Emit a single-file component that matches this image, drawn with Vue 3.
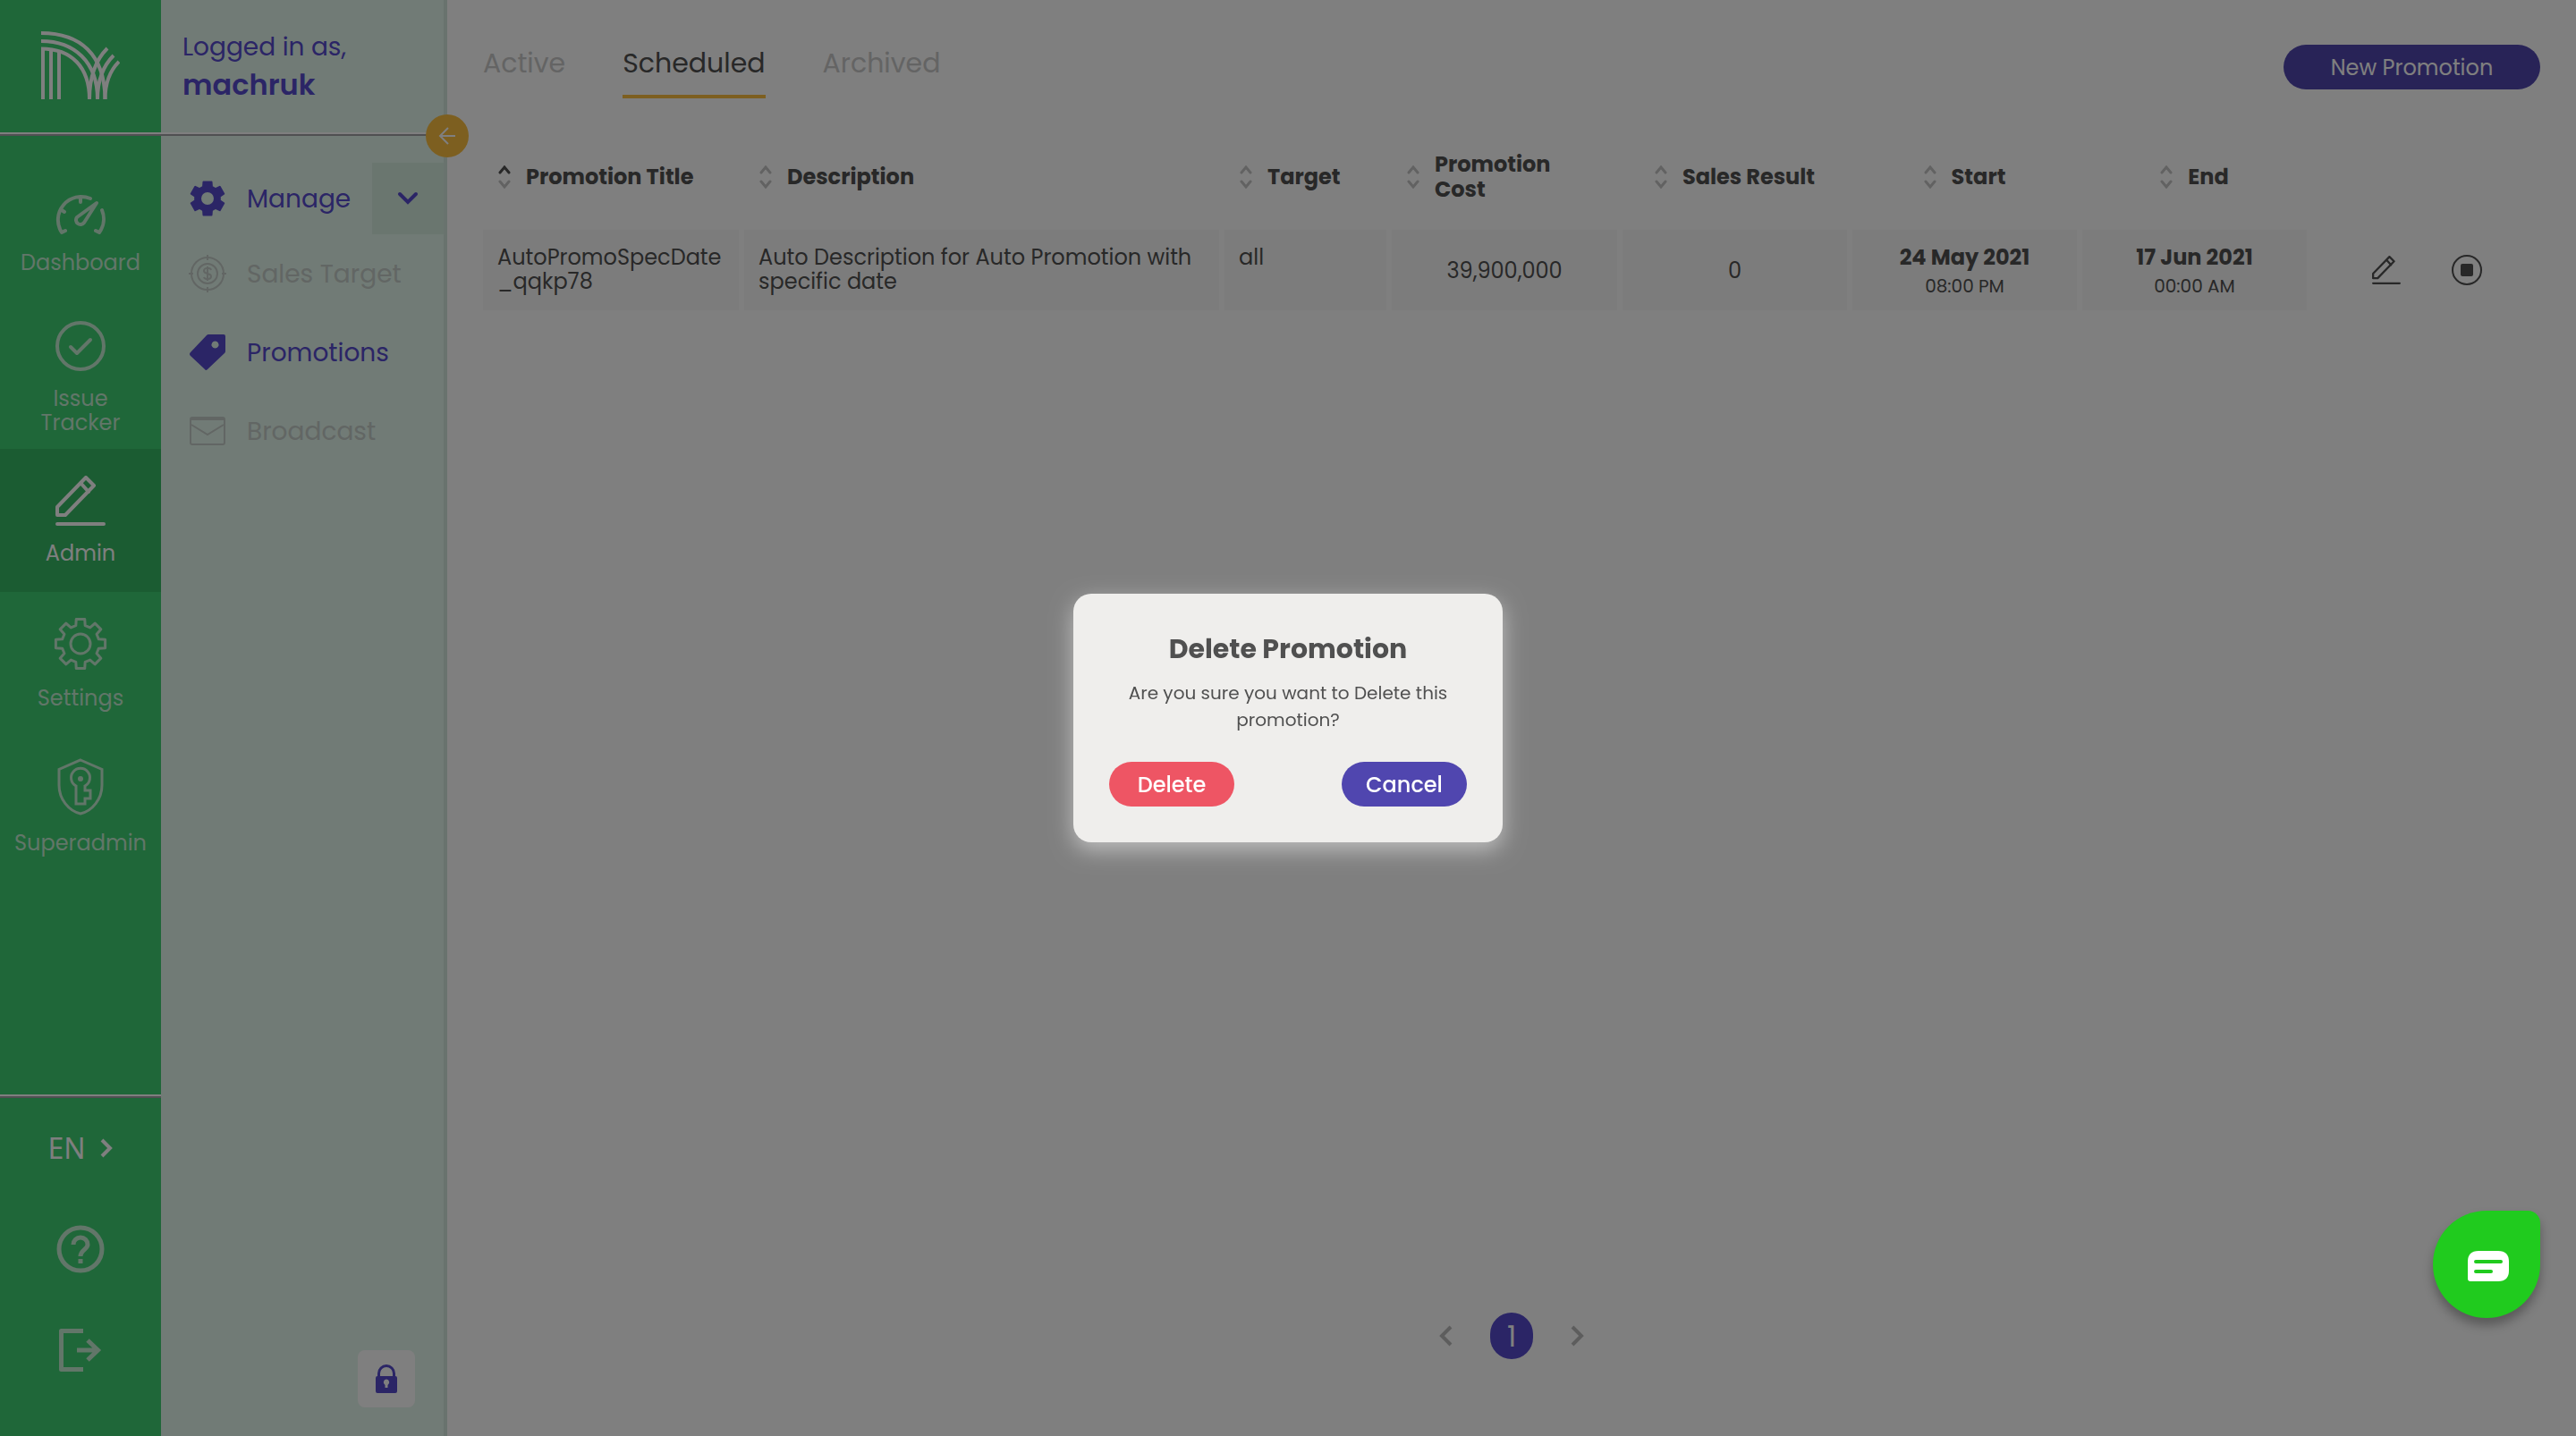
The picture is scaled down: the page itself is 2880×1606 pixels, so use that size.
<script setup>
import { ref } from 'vue'

const railItems = [
  { id: 'dashboard', label: 'Dashboard' },
  { id: 'issues', label: 'Issue Tracker' },
  { id: 'admin', label: 'Admin', active: true },
  { id: 'settings', label: 'Settings' },
  { id: 'superadmin', label: 'Superadmin' }
]

const tabs = ['Active', 'Scheduled', 'Archived']
const currentTab = ref('Scheduled')

const columns = [
  { key: 'title', label: 'Promotion Title', sorted: true },
  { key: 'description', label: 'Description' },
  { key: 'target', label: 'Target' },
  { key: 'cost', label: 'Promotion Cost' },
  { key: 'result', label: 'Sales Result', centered: true },
  { key: 'start', label: 'Start', centered: true },
  { key: 'end', label: 'End', centered: true }
]

// Closed outline of a cog centred on 0,0
function gear(teeth, outer, root, topHalf, baseHalf) {
  const pts = []
  const at = (r, a) => `${(r * Math.sin(a)).toFixed(2)} ${(-r * Math.cos(a)).toFixed(2)}`
  for (let i = 0; i < teeth; i++) {
    const a = (i * 2 * Math.PI) / teeth
    pts.push(at(root, a - baseHalf), at(outer, a - topHalf), at(outer, a + topHalf), at(root, a + baseHalf))
  }
  return `M${pts.join('L')}Z`
}
const cogOutline = gear(8, 28, 21, 0.17, 0.25)
const cogSolid = gear(6, 19, 14, 0.24, 0.36)
</script>

<template>
  <div class="shell">
    <nav class="rail" aria-label="Main">
      <div class="brand">
        <svg width="88" height="76" viewBox="0 0 88 76" fill="none" stroke="#fff" stroke-width="4">
          <path d="M2 76V20M11 76V21M20 76V22" />
          <path d="M0 2C44 2 71 26 71.500 76M0 11C37 11 63 34 63 76M0 19.500C34 19.500 54 40 54 76" />
          <path d="M74 19C60 33 54 54 54 76M81 27C69 39 63 57 63 76M87 34C76 45 71.500 60 71.500 76" />
        </svg>
      </div>
      <div class="rule"></div>
      <ul class="rail-list">
        <li v-for="item in railItems" :key="item.id">
          <a href="#" class="rail-item" :class="{ active: item.active }">
            <svg v-if="item.id === 'dashboard'" width="56" height="46" viewBox="0 0 56 46" fill="none" stroke="currentColor" stroke-width="4" stroke-linecap="round" stroke-linejoin="round">
              <path d="M39 5A26 26 0 0 0 7 43L11 41M52 18A26 26 0 0 1 49 43L45 41M28 3V9M7 18L10 20M24 26L46 10L32 32A5 5 0 1 1 24 26Z" />
            </svg>
            <svg v-else-if="item.id === 'issues'" width="56" height="56" viewBox="0 0 56 56" fill="none" stroke="currentColor" stroke-width="4" stroke-linecap="round" stroke-linejoin="round">
              <circle cx="28" cy="28" r="26" />
              <path d="M17 29L24 36L39 21" />
            </svg>
            <svg v-else-if="item.id === 'admin'" width="56" height="56" viewBox="0 0 56 56" fill="none" stroke="currentColor" stroke-width="4" stroke-linecap="round" stroke-linejoin="round">
              <path d="M2 35L34 2L43 11L11 44H2ZM28 8L37 18M2 54H54" />
            </svg>
            <svg v-else-if="item.id === 'settings'" width="60" height="60" viewBox="-30 -30 60 60" fill="none" stroke="currentColor" stroke-width="3" stroke-linejoin="round">
              <path :d="cogOutline" />
              <circle r="11" />
            </svg>
            <svg v-else width="52" height="64" viewBox="0 0 52 64" fill="none" stroke="currentColor" stroke-width="3">
              <path d="M26 2L50 12.500V30C50 46 39 59 26 62C13 59 2 46 2 30V12.500Z" />
              <path d="M21 31A10.500 10.500 0 1 1 31 31V36H37V45H31V51H21Z" />
              <circle cx="26" cy="23" r="3" fill="currentColor" stroke="none" />
            </svg>
            <span>{{ item.label }}</span>
          </a>
        </li>
      </ul>
      <div class="rail-foot">
        <div class="rule"></div>
        <button type="button" class="lang">
          EN
          <svg width="15" height="22" viewBox="0 0 15 22" fill="none" stroke="currentColor" stroke-width="4"><path d="M2 2L11 11L2 20" /></svg>
        </button>
        <button type="button" class="foot-button" aria-label="Help">
          <svg width="54" height="54" viewBox="0 0 54 54" fill="none" stroke="currentColor" stroke-width="5">
            <circle cx="27" cy="27" r="24" />
            <path d="M19 22A8 8 0 1 1 35 22C35 27 27 28 27 35M27 38V43" />
          </svg>
        </button>
        <button type="button" class="foot-button logout" aria-label="Log out">
          <svg width="48" height="48" viewBox="0 0 48 48" fill="none" stroke="currentColor" stroke-width="5" stroke-linejoin="round">
            <path d="M27 2.500H2.500V45.500H27" />
            <path d="M20 24H44M32 13L43.500 24L32 35" stroke-linejoin="miter" />
          </svg>
        </button>
      </div>
    </nav>

    <aside class="panel">
      <div class="user">
        <p>Logged in as,</p>
        <p class="name">machruk</p>
      </div>
      <div class="rule"></div>
      <button type="button" class="collapse" aria-label="Collapse menu">
        <svg width="20" height="20" viewBox="0 0 20 20" fill="none" stroke="#fff" stroke-width="2"><path d="M19 10H2M11 1L2 10L11 19" /></svg>
      </button>
      <ul class="menu">
        <li class="menu-row manage">
          <a href="#">
            <svg width="42" height="42" viewBox="-21 -21 42 42" fill="currentColor" stroke="currentColor" stroke-width="2" stroke-linejoin="round">
              <path fill-rule="evenodd" :d="cogSolid + 'M8 0A8 8 0 1 0 -8 0A8 8 0 1 0 8 0Z'" />
            </svg>
            <span>Manage</span>
          </a>
          <button type="button" class="toggle" aria-label="Toggle manage menu">
            <svg width="24" height="16" viewBox="0 0 24 16" fill="none" stroke="currentColor" stroke-width="4" stroke-linecap="round"><path d="M3 3L12 12L21 3" /></svg>
          </button>
        </li>
        <li class="menu-row muted">
          <a href="#">
            <svg width="42" height="42" viewBox="0 0 42 42" fill="none" stroke="currentColor" stroke-width="2">
              <circle cx="21" cy="21" r="18" />
              <circle cx="21" cy="21" r="11" />
              <path d="M21 0V6M21 36V42M0 21H5M37 21H42" />
              <path d="M25 17C24 14 17 14 17 18C17 22 25 20 25 24C25 28 18 28 17 25M21 13V29" />
            </svg>
            <span>Sales Target</span>
          </a>
        </li>
        <li class="menu-row">
          <a href="#">
            <svg width="42" height="42" viewBox="0 0 42 42" fill="currentColor">
              <path fill-rule="evenodd" d="M22 1H39Q41 1 41 3V20Q41 21 40 22L21 40Q19 42 18 40L2 25Q0 23 2 21L20 2Q21 1 22 1ZM29.500 8.500A4 4 0 1 0 29.510 8.500Z" />
            </svg>
            <span>Promotions</span>
          </a>
        </li>
        <li class="menu-row muted">
          <a href="#">
            <svg width="42" height="34" viewBox="0 0 42 34" fill="none" stroke="currentColor" stroke-width="2">
              <rect x="2" y="2" width="38" height="30" rx="2" />
              <path d="M2 4H40M3 10L21 21L39 10" />
            </svg>
            <span>Broadcast</span>
          </a>
        </li>
      </ul>
      <button type="button" class="lock" aria-label="Lock menu">
        <svg width="24" height="32" viewBox="0 0 24 32">
          <path d="M3.500 14V10A8.500 8.500 0 0 1 20.500 10V14" fill="none" stroke="currentColor" stroke-width="3" />
          <path fill="currentColor" fill-rule="evenodd" d="M2 13H22Q24 13 24 15V30Q24 32 22 32H2Q0 32 0 30V15Q0 13 2 13ZM12 16.500A3.500 3.500 0 0 0 10.500 23V26H13.500V23A3.500 3.500 0 0 0 12 16.500Z" />
        </svg>
      </button>
    </aside>

    <main class="content">
      <header class="topbar">
        <div class="tabs" role="tablist">
          <button v-for="tab in tabs" :key="tab" type="button" role="tab" class="tab" :class="{ current: tab === currentTab }" :aria-selected="tab === currentTab" @click="currentTab = tab">{{ tab }}</button>
        </div>
        <button type="button" class="pill primary create">New Promotion</button>
      </header>

      <table class="promotions">
        <colgroup>
          <col class="c-title" />
          <col />
          <col class="c-target" />
          <col class="c-cost" />
          <col class="c-date" />
          <col class="c-date" />
          <col class="c-date" />
          <col class="c-actions" />
        </colgroup>
        <thead>
          <tr>
            <th v-for="col in columns" :key="col.key" scope="col">
              <div class="head" :class="{ centered: col.centered }">
                <svg width="14" height="26" viewBox="0 0 14 26" fill="none" stroke="#c4c4c4" stroke-width="3" stroke-linecap="round">
                  <path d="M2 8L7 2L12 8" :class="{ sorted: col.sorted }" />
                  <path d="M2 18L7 24L12 18" />
                </svg>
                <span>{{ col.label }}</span>
              </div>
            </th>
            <td></td>
          </tr>
        </thead>
        <tbody>
          <tr>
            <td>AutoPromoSpecDate_qqkp78</td>
            <td>Auto Description for Auto Promotion with specific date</td>
            <td>all</td>
            <td class="figure">39,900,000</td>
            <td class="figure">0</td>
            <td class="when"><strong>24 May 2021</strong><small>08:00 PM</small></td>
            <td class="when"><strong>17 Jun 2021</strong><small>00:00 AM</small></td>
            <td class="actions-cell">
              <div class="actions">
                <button type="button" aria-label="Edit promotion">
                  <svg width="32" height="32" viewBox="0 0 56 56" fill="none" stroke="currentColor" stroke-width="4" stroke-linecap="round" stroke-linejoin="round">
                    <path d="M2 35L34 2L43 11L11 44H2ZM28 8L37 18M2 54H54" />
                  </svg>
                </button>
                <button type="button" aria-label="Stop promotion">
                  <svg width="34" height="34" viewBox="0 0 34 34"><circle cx="17" cy="17" r="16" fill="none" stroke="currentColor" stroke-width="2" /><rect x="10" y="10" width="14" height="14" rx="2" fill="currentColor" /></svg>
                </button>
              </div>
            </td>
          </tr>
        </tbody>
      </table>

      <nav class="pager" aria-label="Pages">
        <button type="button" aria-label="Previous page">
          <svg width="16" height="24" viewBox="0 0 16 24" fill="none" stroke="currentColor" stroke-width="4"><path d="M14 2L4 12L14 22" /></svg>
        </button>
        <button type="button" class="page">1</button>
        <button type="button" aria-label="Next page">
          <svg width="16" height="24" viewBox="0 0 16 24" fill="none" stroke="currentColor" stroke-width="4"><path d="M2 2L12 12L2 22" /></svg>
        </button>
      </nav>
    </main>

    <div class="backdrop">
      <section class="dialog" role="dialog" aria-labelledby="dialog-title">
        <h2 id="dialog-title">Delete Promotion</h2>
        <p>Are you sure you want to Delete this promotion?</p>
        <div class="dialog-actions">
          <button type="button" class="pill danger">Delete</button>
          <button type="button" class="pill primary">Cancel</button>
        </div>
      </section>
    </div>

    <button type="button" class="chat" aria-label="Open chat">
      <svg width="46" height="34" viewBox="0 0 46 34">
        <path fill="#fff" d="M12 0H34Q46 0 46 12V22Q46 34 34 34H3Q0 34 0 31V12Q0 0 12 0Z" />
        <path d="M9 12H37M9 23H26" stroke="#20cb1e" stroke-width="4" stroke-linecap="round" />
      </svg>
    </button>
  </div>
</template>

<style>
body {
  margin: 0;
  background: #fff;
}
</style>

<style scoped>
.shell {
  display: flex;
  min-height: 100vh;
  font-family: Poppins, Inter, "Noto Sans", sans-serif;
  font-size: 24px;
  line-height: 27px;
  color: #505050;
}
button {
  font: inherit;
  color: inherit;
  border: 0;
  padding: 0;
  background: none;
  cursor: pointer;
}
svg {
  display: block;
  flex: none;
}
a {
  color: inherit;
  text-decoration: none;
}
ul {
  list-style: none;
  margin: 0;
  padding: 0;
}
p,
h2 {
  margin: 0;
}
.rule {
  height: 2px;
  background: #fff;
  border-bottom: 2px solid #a0a0a4;
}

/* Left rail */
.rail {
  display: flex;
  flex-direction: column;
  flex: none;
  width: 180px;
  background: #3ecf73;
  color: #c4ecd2;
}
.brand {
  display: flex;
  align-items: center;
  justify-content: center;
  height: 146px;
  padding-bottom: 2px;
}
.rail-list {
  padding-top: 30px;
}
.rail-item {
  display: flex;
  flex-direction: column;
  align-items: center;
  justify-content: center;
  gap: 17px;
  box-sizing: border-box;
  min-height: 160px;
  padding: 0 12px;
  text-align: center;
}
.rail-item.active {
  background: #36b865;
  color: #fff;
}
.rail-foot {
  display: flex;
  flex-direction: column;
  align-items: center;
  margin-top: auto;
  padding-bottom: 72px;
}
.rail-foot .rule {
  align-self: stretch;
}
.lang {
  display: flex;
  align-items: center;
  gap: 16px;
  margin: 34px 0 2px;
  font-family: "Noto Sans", sans-serif;
  font-size: 32px;
  line-height: 44px;
  color: #fff;
}
.foot-button {
  margin-top: 62px;
}

/* Secondary panel */
.panel {
  position: relative;
  display: flex;
  flex-direction: column;
  flex: none;
  box-sizing: border-box;
  width: 320px;
  background: #e3f6ec;
  border-right: 4px solid #d2e6dc;
  color: #564bcc;
}
.user {
  box-sizing: border-box;
  height: 148px;
  padding: 32px 24px 0;
  font-size: 28px;
  line-height: 42px;
}
.name {
  font-size: 32px;
  font-weight: 600;
}
.collapse {
  position: absolute;
  top: 128px;
  right: -28px;
  display: flex;
  align-items: center;
  justify-content: center;
  width: 48px;
  height: 48px;
  border-radius: 50%;
  background: #fabe40;
}
.menu {
  padding-top: 30px;
  font-size: 28px;
  line-height: 40px;
}
.menu-row {
  display: flex;
  height: 88px;
}
.menu-row a {
  display: flex;
  align-items: center;
  flex: 1;
  gap: 23px;
  padding-left: 31px;
}
.menu-row span {
  padding-top: 2px;
}
.menu-row.manage {
  height: 80px;
}
.menu-row.muted {
  color: #c4cdc8;
}
.toggle {
  display: flex;
  align-items: center;
  justify-content: center;
  width: 80px;
  background: #d5ecde;
}
.lock {
  display: flex;
  align-items: center;
  justify-content: center;
  align-self: flex-end;
  width: 64px;
  height: 64px;
  margin: auto 32px 32px 0;
  border-radius: 8px;
  background: #fff;
}

/* Main area */
.content {
  display: flex;
  flex-direction: column;
  flex: 1;
  padding: 50px 40px 86px;
}
.topbar {
  display: flex;
  align-items: flex-start;
  justify-content: space-between;
}
.tabs {
  display: flex;
  gap: 64px;
}
.tab {
  height: 60px;
  padding-bottom: 14px;
  border-bottom: 4px solid transparent;
  font-size: 30px;
  line-height: 40px;
  color: #c8c8c8;
}
.tab.current {
  color: #505050;
  border-color: #fabe40;
}
.pill {
  height: 50px;
  border-radius: 25px;
  color: #fff;
  font-weight: 500;
}
.primary {
  background: #5046af;
}
.danger {
  background: #ee5564;
}
.create {
  width: 287px;
  font-weight: 400;
}
.promotions {
  width: 100%;
  margin-top: 30px;
  border-collapse: separate;
  border-spacing: 0;
  table-layout: fixed;
}
.c-title {
  width: 292px;
}
.c-target {
  width: 187px;
}
.c-cost {
  width: 258px;
}
.c-date {
  width: 257px;
}
.c-actions {
  width: 255px;
}
th {
  box-sizing: border-box;
  height: 117px;
  padding: 0 0 2px 17px;
  text-align: left;
  font-weight: 700;
  line-height: 28px;
}
.head {
  display: flex;
  align-items: center;
  gap: 17px;
}
.head span {
  max-width: 200px;
}
th:nth-child(4) span {
  max-width: 140px;
}
.head.centered {
  justify-content: center;
  margin-right: 23px;
}
.sorted {
  stroke: #505050;
}
tbody td {
  box-sizing: border-box;
  height: 90px;
  padding: 17px 10px 17px 16px;
  border-right: 6px solid #fff;
  background: #f9f9f9;
  vertical-align: top;
  overflow-wrap: anywhere;
}
tbody td.figure {
  padding: 0;
  text-align: center;
  vertical-align: middle;
}
tbody td.when {
  padding: 17px 0 0;
  text-align: center;
}
.when strong,
.when small {
  display: block;
}
.when small {
  margin-top: 6px;
  font-size: 20px;
}
tbody td.actions-cell {
  padding: 0 0 0 67px;
  border: 0;
  background: none;
  vertical-align: middle;
}
.actions {
  display: flex;
  align-items: center;
  gap: 57px;
}
.pager {
  display: flex;
  align-items: center;
  justify-content: center;
  gap: 42px;
  margin-top: auto;
  color: #bbb;
}
.page {
  width: 48px;
  height: 52px;
  border-radius: 24px;
  background: #564bcc;
  color: #fff;
  font-size: 32px;
}

/* Overlays */
.backdrop {
  position: fixed;
  inset: 0;
  display: flex;
  align-items: center;
  justify-content: center;
  background: rgba(0, 0, 0, 0.5);
}
.dialog {
  box-sizing: border-box;
  width: 480px;
  padding: 42px 40px 40px;
  border-radius: 20px;
  background: #efeeec;
  box-shadow: 0 8px 24px rgba(255, 255, 255, 0.5);
  text-align: center;
}
.dialog h2 {
  font-size: 30px;
  line-height: 40px;
}
.dialog p {
  margin: 14px 0 32px;
  font-size: 20px;
  line-height: 30px;
}
.dialog-actions {
  display: flex;
  justify-content: space-between;
}
.dialog-actions .pill {
  width: 140px;
}
.chat {
  position: fixed;
  right: 40px;
  bottom: 132px;
  display: flex;
  align-items: center;
  justify-content: center;
  width: 120px;
  height: 120px;
  padding: 4px 0 0 4px;
  border-radius: 60px 14px 60px 60px;
  background: #20cb1e;
  box-shadow: 0 8px 12px rgba(0, 0, 0, 0.3);
}
</style>
